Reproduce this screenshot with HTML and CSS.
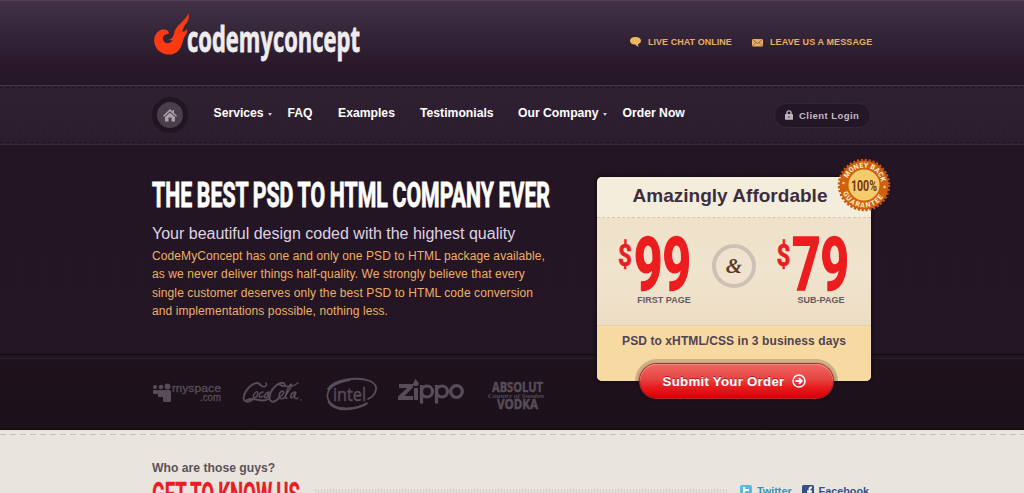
FILE: index.html
```html
<!DOCTYPE html>
<html lang="en">
<head>
<meta charset="utf-8">
<title>CodeMyConcept</title>
<link rel="stylesheet" href="styles.css">
</head>
<body>
<header class="header">
  <div class="wrap header-row">
    <svg class="logo" width="212" height="60" viewBox="0 0 212 60">
      <path fill="#fc3a12" d="M37.500 13C35 21 24 25 23 34C21 41 16 41 15.500 37C15 34 17 33 18 34C18 30 13 28 8 31C2 35 2 43 6 49C11 55 21 57 27 51C31 47 31 43 33 38C34 35 37 34 36 29C34 32 32 32 31 31C33 29 32 27 34 25C37 22 38.500 18 37.500 13Z"/>
      <path fill="#35263a" d="M17 34C12.500 34 10.500 38 13 41.500C15 44 19 44 22 40C19 41 15.500 40 17 34Z"/>
      <text class="logo-text" x="36" y="52" textLength="173" lengthAdjust="spacingAndGlyphs">codemyconcept</text>
    </svg>
    <div class="contact">
      <a class="contact-link"><svg width="12" height="10" viewBox="0 0 12 10"><path fill="#f0b861" d="M5.500 0C2 0 0 1.700 0 3.800S2 7.500 5 7.500L8.500 10L8 7C10 6.500 11 5.300 11 3.800C11 1.600 9 0 5.500 0Z"/></svg><span class="chat-label">LIVE CHAT ONLINE</span></a>
      <a class="contact-link"><svg width="12" height="9" viewBox="0 0 12 9"><rect y="1" width="11" height="7.500" rx="1" fill="#e5af68"/><path d="M.5 1.500L5.500 5.500L10.500 1.500M.5 8L4 4.500M10.500 8L7 4.500" fill="none" stroke="#6b4b3d" stroke-width=".7"/></svg><span class="message-label">LEAVE US A MESSAGE</span></a>
    </div>
  </div>
</header>
<nav class="nav">
  <div class="wrap nav-row">
    <a class="home"><svg width="14" height="14" viewBox="0 0 14 14"><path fill="#aaa1aa" d="M7 1L9.500 3.400V2H11V4.900L14 7.800L13 8.700L7 3.200L1 8.700L0 7.800ZM7 4.400L12 9V13.500H8.500V9.500H5.500V13.500H2V9Z"/></svg></a>
    <div class="menu">
      <a>Services<i class="caret"></i></a><a>FAQ</a><a>Examples</a><a>Testimonials</a><a>Our Company<i class="caret"></i></a><a>Order Now</a>
    </div>
    <a class="login"><svg width="8" height="10" viewBox="0 0 8 10"><path fill="none" stroke="#bdb4be" stroke-width="1.400" d="M2 5V2.800C2 .2 6 .2 6 2.800V5"/><rect y="4" width="8" height="5.800" rx=".6" fill="#bdb4be"/><path stroke="#46384a" d="M4 6V8"/></svg><span>Client Login</span></a>
  </div>
</nav>
<section class="hero">
  <div class="wrap hero-row">
    <div class="intro">
      <svg class="headline" width="402" height="36" viewBox="0 0 402 36"><text x="1" y="30" textLength="398" lengthAdjust="spacingAndGlyphs">THE BEST PSD TO HTML COMPANY EVER</text></svg>
      <h2 class="tagline">Your beautiful design coded with the highest quality</h2>
      <p class="copy">CodeMyConcept has one and only one PSD to HTML package available,<br>as we never deliver things half-quality. We strongly believe that every<br>single customer deserves only the best PSD to HTML code conversion<br>and implementations possible, nothing less.</p>
    </div>
    <aside class="card">
      <h3 class="card-title">Amazingly Affordable</h3>
      <div class="prices">
        <div class="price">
          <svg width="75" height="60" viewBox="0 0 75 60"><text class="dollar" x="0" y="32" textLength="14" lengthAdjust="spacingAndGlyphs">$</text><text class="amount" x="16" y="56" textLength="57" lengthAdjust="spacingAndGlyphs">99</text></svg>
          <span>FIRST PAGE</span>
        </div>
        <div class="amp">&amp;</div>
        <div class="price">
          <svg width="75" height="60" viewBox="0 0 75 60"><text class="dollar" x="1.500" y="32" textLength="14" lengthAdjust="spacingAndGlyphs">$</text><text class="amount" x="17" y="56" textLength="57" lengthAdjust="spacingAndGlyphs">79</text></svg>
          <span>SUB-PAGE</span>
        </div>
      </div>
      <div class="card-foot">
        <p>PSD to xHTML/CSS in 3 business days</p>
        <a class="order"><span>Submit Your Order</span><svg width="14" height="14" viewBox="0 0 14 14" fill="none" stroke="#fff" stroke-width="1.500"><circle cx="7" cy="7" r="6"/><path stroke-width="1.800" d="M3.500 7H9.500M7 4.200L9.800 7L7 9.800"/></svg></a>
      </div>
      <svg class="badge" width="54" height="54" viewBox="-27 -27 54 54">
        <circle r="24.500" fill="#d0600c"/>
        <circle r="25" fill="none" stroke="#c4560b" stroke-width="2.400" stroke-dasharray="2.200 1.727"/>
        <circle r="15.500" fill="#f5cc6b"/>
        <path id="arc-top" fill="none" d="M-17.500 0A17.500 17.500 0 0 1 17.500 0"/>
        <path id="arc-bottom" fill="none" d="M-22.500 0A22.500 22.500 0 0 0 22.500 0"/>
        <g transform="rotate(6)">
          <text class="badge-arc" text-anchor="middle"><textPath href="#arc-top" startOffset="50%" textLength="45">MONEY BACK</textPath></text>
          <text class="badge-arc" text-anchor="middle"><textPath href="#arc-bottom" startOffset="50%" textLength="50">GUARANTEE</textPath></text>
        </g>
        <circle cx="-20.500" cy="-2" r="1.200" fill="#ffdca0"/><circle cx="20.500" cy="2" r="1.200" fill="#ffdca0"/>
        <text class="badge-num" x="-13" y="5.500" textLength="26" lengthAdjust="spacingAndGlyphs">100%</text>
      </svg>
    </aside>
  </div>
</section>
<section class="clients">
  <div class="wrap">
    <svg class="brands" width="400" height="40" viewBox="0 0 400 40" fill="#574c58">
      <circle cx="4" cy="9" r="2"/><circle cx="10" cy="9" r="2.300"/><circle cx="16.500" cy="8.500" r="3"/><rect x="2" y="12" width="5" height="4" rx="1"/><rect x="7" y="12" width="6" height="7" rx="1"/><rect x="12" y="12" width="8" height="12" rx="1.500"/>
      <text class="myspace" x="21" y="14" textLength="49" lengthAdjust="spacingAndGlyphs">myspace</text>
      <text class="myspace" x="49" y="22.500" textLength="21" lengthAdjust="spacingAndGlyphs">.com</text>
      <g fill="none" stroke="#574c58" stroke-linecap="round">
        <path stroke-width="1.900" d="M109 7C107 2 98 7 94 15C90 23 96 27 103 20"/>
        <path stroke-width="1.900" d="M134 7C133 2 124 6 120 14C116 23 121 27 128 20M96 22C103 18 110 26 117 21"/>
        <path stroke-width="1.500" d="M105 14C101 17 102 22 105 19C107 17 108 13 105 14M112 14C107 15 107 22 112 18M118 14C113 15 112 22 116 19L118 14L117 19M128 19C133 17 134 13 131 13C127 15 127 23 133 20C137 14 142 7 140 6C137 8 132 22 136 20M144 14C139 15 138 22 142 19L145 14C143 19 143 22 147 20M109 6C112 11 117 8 115 5M127 6C132 9 141 10 147 5"/>
        <path stroke-width="1.800" d="M177 11C182 2 205-2 219 3C230 8 224 18 217 21M199 2C183 4 174 12 177 21C181 34 205 32 216 25"/>
        <path stroke-width="2.500" d="M178 24C184 34 204 32 215 26"/>
      </g>
      <circle cx="150" cy="22" r=".8"/>
      <text class="intel" x="182" y="22.500" textLength="33" lengthAdjust="spacingAndGlyphs">intel</text>
      <path d="M248 6H262V9.500L253.500 18H262V22H247V18.500L256 10H248ZM263 10H267V22H263ZM263 8C260 6 264 4 264 1C268 4 269 7 266 8Z"/>
      <g fill="none" stroke="#574c58" stroke-width="3.200"><path d="M270.500 25.500V7M285.500 25.500V7"/><circle cx="276" cy="13.500" r="5.500"/><circle cx="291" cy="13.500" r="5.500"/><circle cx="305.500" cy="13.500" r="5.800"/></g>
      <text class="absolut" x="341" y="14" textLength="51" lengthAdjust="spacingAndGlyphs">ABSOLUT</text>
      <text class="country" x="337" y="19.500" textLength="56" lengthAdjust="spacingAndGlyphs">Country of Sweden</text>
      <text class="absolut" x="346" y="31" textLength="41" lengthAdjust="spacingAndGlyphs">VODKA</text>
    </svg>
  </div>
</section>
<main class="about">
  <div class="wrap about-row">
    <div class="about-title">
      <p>Who are those guys?</p>
      <svg width="152" height="34" viewBox="0 0 152 34"><text x="1" y="27.500" textLength="148" lengthAdjust="spacingAndGlyphs">GET TO KNOW US</text></svg>
    </div>
    <div class="rule"></div>
    <a class="social twitter"><svg width="12" height="12" viewBox="0 0 12 12"><rect width="12" height="12" rx="2" fill="#55bde4"/><path fill="none" stroke="#fff" stroke-width="2" d="M4 2V8C4 9.500 6 9.500 9 9.500M4 5H9"/></svg>Twitter</a>
    <a class="social facebook"><svg width="12" height="12" viewBox="0 0 12 12"><rect width="12" height="12" rx="1.500" fill="#35518c"/><path fill="none" stroke="#fff" stroke-width="1.800" d="M10 2.500H9C7.500 2.500 7.500 3.500 7.500 5V12M5 6.500H10"/></svg>Facebook</a>
  </div>
</main>
</body>
</html>
```
FILE: styles.css
```css
* { box-sizing: border-box; }
html, body { height: 100%; }
body { margin: 0; overflow: hidden; font-family: "Liberation Sans", Arial, sans-serif; background: #e9e5de; }
h2, h3, p { margin: 0; }
svg { display: block; flex: none; overflow: visible; }
a { white-space: nowrap; }
.wrap { width: 722px; margin: 0 auto; }

.header {
  height: 85px;
  border-top: 1px solid #513f55;
  background: linear-gradient(#433247 0, #36263a 35%, #29192b 75%, #261728 100%);
}
.header-row { display: flex; justify-content: space-between; margin-top: -1px; }
.logo-text { font: bold 36px "Open Sans", sans-serif; fill: #efecef; stroke: #efecef; stroke-width: .8px; }
.contact { display: flex; align-items: center; gap: 20px; height: 20px; margin-top: 32px; }
.contact-link { display: flex; align-items: center; gap: 6px; font-size: 9px; font-weight: bold; color: #e5af62; }
.chat-label { width: 84px; letter-spacing: .03px; }
.message-label { width: 103px; letter-spacing: .12px; }

.nav {
  height: 60px;
  border-top: 1px solid #443547;
  border-bottom: 1px solid #39293b;
  background:
    repeating-linear-gradient(90deg, #1e121f 0 3px, transparent 3px 6px) 0 1px / 100% 1px no-repeat,
    repeating-linear-gradient(90deg, #1e121f 0 3px, transparent 3px 6px) 0 56px / 100% 1px no-repeat,
    repeating-linear-gradient(90deg, rgba(0,0,0,.06) 0 1px, transparent 1px 3px),
    linear-gradient(#302132, #2d1d2f);
}
.nav-row { display: flex; align-items: center; height: 58px; }
.home { display: flex; align-items: center; justify-content: center; width: 36px; height: 36px; margin-left: 1px; border: 5px solid #211524; border-radius: 50%; background: #4a3d4c; }
.menu { display: grid; grid-template-columns: 74px 50.5px 82px 98px 104.5px 70px; margin: -4px 0 0 25.5px; font-size: 12.2px; line-height: 16px; font-weight: bold; color: #fff; }
.caret { display: inline-block; margin-left: 4px; vertical-align: 1px; border: 2.5px solid transparent; border-top: 3px solid #cfc7d0; border-bottom: 0; }
.login { display: flex; align-items: center; gap: 6px; width: 97px; height: 25px; margin: 0 2px 0 auto; padding-left: 10px; border: 1px solid #352638; border-radius: 13px; background: #231626; color: #c3bac4; font-size: 9.5px; font-weight: bold; letter-spacing: .45px; }

.hero {
  position: relative;
  z-index: 1;
  height: 210px;
  border-bottom: 1px solid #120a12;
  background:
    repeating-linear-gradient(90deg, rgba(0,0,0,.06) 0 1px, transparent 1px 3px),
    linear-gradient(#241524, #251626);
}
.hero-row { display: flex; }
.intro { width: 446px; padding-top: 32px; }
.headline text { font: bold 35px Roboto, sans-serif; word-spacing: -1px; fill: #fff; stroke: #fff; stroke-width: .9px; }
.tagline { margin-top: 11px; padding-left: 1px; font-size: 16px; line-height: 20px; font-weight: normal; color: #dfd3e2; white-space: nowrap; }
.copy { margin-top: 3px; padding-left: 1px; font-size: 12px; letter-spacing: .09px; line-height: 18.300px; color: #efb060; white-space: nowrap; }

.card { position: relative; width: 274px; height: 204px; margin-top: 32px; border-radius: 5px; background: #efe1ca; box-shadow: 0 0 3px 2px #190d19; }
.card-title { height: 41px; padding-right: 8px; border-radius: 5px 5px 0 0; border-bottom: 1px dashed #d5c7b1; background: #f5eddc; font-size: 19px; letter-spacing: .02px; line-height: 38px; text-align: center; color: #3c2e41; }
.prices { display: flex; height: 107px; background: linear-gradient(#efe1ca, #f0e4ce 50%, #ecdcc4); }
.price { width: 75px; margin: 16px 0 0 21px; color: #655963; font-size: 9px; line-height: 13px; font-weight: bold; }
.price span { display: block; width: 54px; margin-left: 19px; text-align: center; white-space: nowrap; }
.dollar { font: bold 32px Roboto, sans-serif; fill: #ed1c1e; stroke: #ed1c1e; stroke-width: .6px; }
.amount { font: bold 74px Roboto, sans-serif; fill: #ed1c1e; stroke: #ed1c1e; stroke-width: 1.6px; }
.amp { display: flex; align-items: center; justify-content: center; width: 44px; height: 44px; margin: 26px -2px 0 19px; border: 4px solid #ccc1b4; border-radius: 50%; background: #efe3d0; font: italic bold 21px "Liberation Serif", serif; color: #5a3b25; }
.card-foot { height: 56px; border-radius: 0 0 5px 5px; border-top: 1px solid #e4cfa9; background: #f7d9a2; padding-top: 5px; }
.card-foot p { font-size: 12px; line-height: 20px; font-weight: bold; letter-spacing: .09px; text-align: center; color: #514354; white-space: nowrap; }
.order { display: flex; align-items: center; justify-content: center; gap: 8px; width: 193px; height: 34px; margin: 13px 0 0 43px; padding: 0 4px 0 0; border-radius: 17px; background: linear-gradient(#ef6762, #e64441 45%, #e61a1c 70%, #d90006); box-shadow: inset 0 1px #f38b81, 0 0 0 1px #b32624, 0 0 0 5px rgba(38,22,31,.2), 0 2px 3px 2px rgba(20,7,20,.35); color: #fff; font-size: 13.3px; letter-spacing: .25px; font-weight: bold; text-shadow: 0 -1px #a92325; }
.badge { position: absolute; left: 240px; top: -19px; }
.badge-arc { font: bold 7px Roboto, sans-serif; fill: #fff1d7; }
.badge-num { font: bold 14px Roboto, sans-serif; fill: #743315; }

.clients { height: 75px; border-top: 3px solid #211521; border-bottom: 1px solid #100a10; background: linear-gradient(#1f121d, #1c1018); box-shadow: inset 0 1px #2b1d2b; padding-top: 20px; }
.myspace { font: 11px "Liberation Sans", sans-serif; stroke: #574c58; stroke-width: .3px; }
.intel { font: 19px "Open Sans", sans-serif; stroke: #574c58; stroke-width: .5px; }
.absolut { font: bold 15px "Open Sans", sans-serif; stroke: #574c58; stroke-width: .6px; }
.country { font: italic bold 7px "Liberation Serif", serif; }

.about { height: 63px; padding-top: 28px; background: repeating-linear-gradient(90deg, #c3bdb5 0 6px, transparent 6px 10px) 0 4px / 100% 1px no-repeat, #e9e5de; }
.about-row { display: flex; }
.about-title { width: 164px; flex: none; color: #5b535b; font-size: 12.200px; line-height: 20px; font-weight: bold; white-space: nowrap; }
.about-title p { padding-left: 1px; }
.about-title text { font: bold 33px Roboto, sans-serif; word-spacing: -1px; fill: #ed1c24; stroke: #ed1c24; stroke-width: .3px; }
.rule { width: 412px; height: 4px; margin-top: 31px; background: repeating-linear-gradient(90deg, #d8d2ca 0 1px, #e4dfd7 1px 3px); }
.social { display: flex; align-items: center; gap: 5px; height: 14px; margin-top: 26px; font-size: 10.800px; font-weight: bold; }
.twitter { margin-left: 13px; color: #3b91b5; }
.facebook { margin-left: 10px; color: #35518c; }
```
